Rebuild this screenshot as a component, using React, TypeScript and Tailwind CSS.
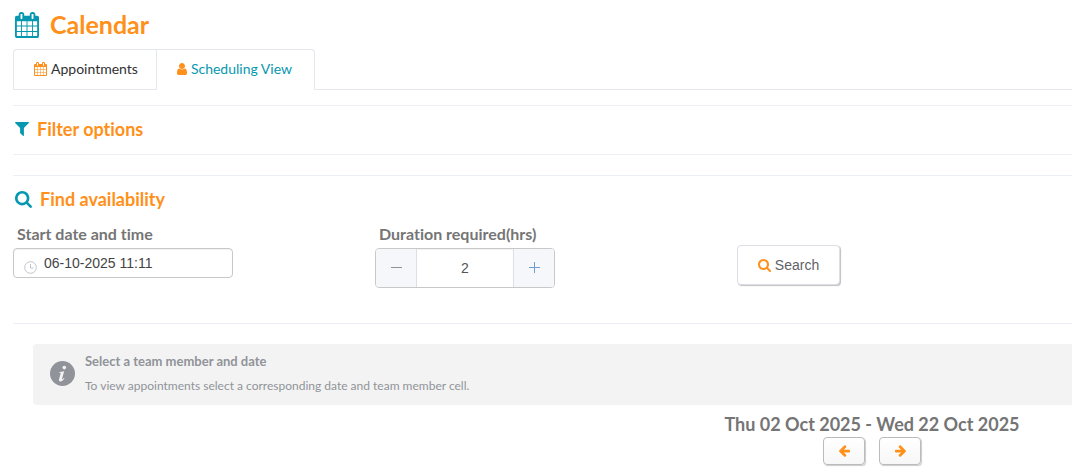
import { useState } from "react";
import type { ReactNode } from "react";

const ICONS = {
  calendar:
    "M192 1664h288v-288h-288v288zm352 0h320v-288h-320v288zm-352-352h288v-320h-288v320zm352 0h320v-320h-320v320zm-352-384h288v-288h-288v288zm736 736h320v-288h-320v288zm-384-736h320v-288h-320v288zm768 736h288v-288h-288v288zm-384-352h320v-320h-320v320zm-352-864v-288q0-13-9.5-22.5t-22.5-9.5h-64q-13 0-22.5 9.5t-9.5 22.5v288q0 13 9.5 22.5t22.5 9.5h64q13 0 22.5-9.5t9.5-22.5zm736 864h288v-320h-288v320zm-384-384h320v-288h-320v288zm384 0h288v-288h-288v288zm32-480v-288q0-13-9.5-22.5t-22.5-9.5h-64q-13 0-22.5 9.5t-9.5 22.5v288q0 13 9.5 22.5t22.5 9.5h64q13 0 22.5-9.5t9.5-22.5zm384-64v1280q0 52-38 90t-90 38h-1408q-52 0-90-38t-38-90v-1280q0-52 38-90t90-38h128v-96q0-66 47-113t113-47h64q66 0 113 47t47 113v96h384v-96q0-66 47-113t113-47h64q66 0 113 47t47 113v96h128q52 0 90 38t38 90z",
  search:
    "M1216 832q0-185-131.5-316.5t-316.5-131.5-316.5 131.5-131.5 316.5 131.5 316.5 316.5 131.5 316.5-131.5 131.5-316.5zm512 832q0 52-38 90t-90 38q-54 0-90-38l-343-342q-179 124-399 124-143 0-273.5-55.5t-225-150-150-225-55.5-273.5 55.5-273.5 150-225 225-150 273.5-55.5 273.5 55.5 225 150 150 225 55.5 273.5q0 220-124 399l343 343q37 37 37 90z",
  filter:
    "M1595 295q17 41-14 70l-493 493v742q0 42-39 59-13 5-25 5-27 0-45-19l-256-256q-19-19-19-45v-486l-493-493q-31-29-14-70 17-39 59-39h1280q42 0 59 39z",
  user: "M1536 1399q0 109-62.5 187t-150.5 78h-854q-88 0-150.5-78t-62.5-187q0-85 8.5-160.5t31.5-152 58.5-131 94-89 134.5-34.5q131 128 313 128t313-128q76 0 134.5 34.5t94 89 58.5 131 31.5 152 8.5 160.5zm-256-887q0 159-112.5 271.5t-271.5 112.5-271.5-112.5-112.5-271.5 112.5-271.5 271.5-112.5 271.5 112.5 112.5 271.5z",
  arrow:
    "M1600 960q0 54-37 91l-651 651q-39 37-91 37-51 0-90-37l-75-75q-38-38-38-91t38-91l293-293h-704q-52 0-84.5-37.5t-32.5-90.5v-128q0-53 32.5-90.5t84.5-37.5h704l-293-294q-38-36-38-90t38-90l75-75q38-38 90-38 53 0 91 38l651 651q37 35 37 90z",
};

// each glyph is cropped to its own width so it can sit inline with text
const BOXES = {
  calendar: "64 0 1664 1792",
  search: "64 128 1664 1664",
  filter: "192 256 1408 1408",
  user: "256 128 1280 1536",
  arrow: "128 160 1472 1579",
};

function Icon({ name, className }: { name: keyof typeof ICONS; className: string }) {
  return (
    <svg viewBox={BOXES[name]} className={`shrink-0 fill-current ${className}`} aria-hidden="true">
      <path d={ICONS[name]} />
    </svg>
  );
}

export default function App() {
  const [start, setStart] = useState("06-10-2025 11:11");
  const [hours, setHours] = useState(2);

  return (
    <main className="bg-white pb-1 pl-[13px] pt-[7px] font-[Lato,sans-serif] text-[#757575] [font-variant-ligatures:none]">
      <h1 className="flex h-9 items-center gap-[11px] pl-0.5 text-[25px] font-bold text-[#ff9019]">
        <Icon name="calendar" className="h-[26px] w-6 text-[#0698b0]" />
        Calendar
      </h1>

      <nav className="mt-1.5 flex h-[41px] text-sm leading-5">
        <a href="#appointments" className="flex items-start gap-1 rounded-tl border border-r-0 border-[#e4e7ed] pl-5 pr-[18px] pt-[9px] text-[#303133]">
          <Icon name="calendar" className="mt-[3px] h-[14px] w-[13px] text-[#ff9019]" />
          Appointments
        </a>
        <a href="#scheduling" className="flex items-start gap-1 rounded-tr border border-b-0 border-[#e4e7ed] pl-5 pr-[22px] pt-[9px] text-[#0698b0]">
          <Icon name="user" className="mt-1 h-3 w-[10px] text-[#ff9019]" />
          Scheduling View
        </a>
        <span className="flex-1 border-b border-[#e4e7ed]" />
      </nav>

      <Section className="mt-[15px] h-[50px] border-b">
        <SectionTitle>
          <Icon name="filter" className="h-[14px] w-[14px] text-[#0698b0]" />
          Filter options
        </SectionTitle>
      </Section>

      <Section className="mt-5 border-b">
        <SectionTitle>
          <Icon name="search" className="h-[17px] w-[17px] text-[#0698b0]" />
          Find availability
        </SectionTitle>
        <form className="flex h-[101px] pt-0.5" onSubmit={(e) => e.preventDefault()}>
          <div className="w-[362px] shrink-0">
            <FieldLabel id="start">Start date and time</FieldLabel>
            <div className="flex h-[30px] w-[220px] rounded border border-[#c8c8c8] shadow-[inset_0_1px_1px_rgba(0,0,0,0.06)]">
              <ClockIcon />
              <input
                id="start"
                value={start}
                onChange={(e) => setStart(e.target.value)}
                className="min-w-0 flex-1 bg-transparent pl-[7px] font-[Liberation_Sans,sans-serif] text-sm text-[#444] outline-none"
              />
            </div>
          </div>
          <div className="w-[362px] shrink-0">
            <FieldLabel id="hours">Duration required(hrs)</FieldLabel>
            <div className="flex h-10 w-[180px] overflow-hidden rounded border border-[#c8c8c8]">
              <StepButton label="Decrease" onClick={() => setHours(Math.max(0, hours - 1))} className="border-r text-[#909399]">
                <path d="M1 5.5h11" />
              </StepButton>
              <input
                id="hours"
                value={hours}
                onChange={(e) => setHours(Number(e.target.value) || 0)}
                className="min-w-0 flex-1 text-center font-[Liberation_Sans,sans-serif] text-sm text-[#555] shadow-[inset_0_1px_1px_rgba(0,0,0,0.06)] outline-none"
              />
              <StepButton label="Increase" onClick={() => setHours(hours + 1)} className="border-l text-[#6f9fd0]">
                <path d="M1 5.5h11M6.5 0v11" />
              </StepButton>
            </div>
          </div>
          <button
            type="submit"
            className="mt-[21px] flex h-10 w-[103px] shrink-0 items-center justify-center gap-1 rounded border border-[#dcdfe6] bg-white font-[Liberation_Sans,sans-serif] text-sm text-[#606266] shadow-[1px_1px_1px_rgba(0,0,0,0.25)]"
          >
            <Icon name="search" className="h-[13px] w-[13px] text-[#ff9019]" />
            Search
          </button>
        </form>
      </Section>

      <div role="status" className="ml-5 mt-5 flex h-[61px] gap-[10px] rounded-l bg-[#f3f3f3] pl-[17px] pt-2 text-[#909399]">
        <InfoIcon />
        <div>
          <p className="text-[13px] font-bold leading-[18px]">Select a team member and date</p>
          <p className="mt-[7px] text-xs leading-[18px]">To view appointments select a corresponding date and team member cell.</p>
        </div>
      </div>

      <div className="ml-auto mt-[7px] w-[400px] text-center">
        <h2 className="text-lg font-bold leading-6">Thu 02 Oct 2025 - Wed 22 Oct 2025</h2>
        <div className="mt-px flex justify-center gap-[14px]">
          <PagerButton label="Previous dates">
            <Icon name="arrow" className="h-3 w-[11px] -scale-x-100" />
          </PagerButton>
          <PagerButton label="Next dates">
            <Icon name="arrow" className="h-3 w-[11px]" />
          </PagerButton>
        </div>
      </div>
    </main>
  );
}

function Section({ className, children }: { className: string; children: ReactNode }) {
  return <section className={`border-t border-[#ebeef5] ${className}`}>{children}</section>;
}

function SectionTitle({ children }: { children: ReactNode }) {
  return <h2 className="flex h-[46px] items-center gap-2 pl-0.5 text-lg font-bold text-[#ff9019]">{children}</h2>;
}

function FieldLabel({ id, children }: { id: string; children: ReactNode }) {
  return (
    <label htmlFor={id} className="block h-6 pl-1 text-base font-bold leading-5">
      {children}
    </label>
  );
}

function StepButton({
  label,
  onClick,
  className,
  children,
}: {
  label: string;
  onClick: () => void;
  className: string;
  children: ReactNode;
}) {
  return (
    <button
      type="button"
      aria-label={label}
      onClick={onClick}
      className={`flex w-[41px] shrink-0 items-center justify-center border-[#dcdfe6] bg-[#f5f7fa] ${className}`}
    >
      <svg viewBox="0 0 13 13" className="h-[13px] w-[13px] stroke-current" aria-hidden="true">
        {children}
      </svg>
    </button>
  );
}

function PagerButton({ label, children }: { label: string; children: ReactNode }) {
  return (
    <button
      type="button"
      aria-label={label}
      className="flex h-7 w-[42px] items-center justify-center rounded-sm border border-[#bbb] bg-linear-to-b from-white to-[#f7f7f7] text-[#ff9019] shadow-[1px_1px_1px_rgba(0,0,0,0.2)]"
    >
      {children}
    </button>
  );
}

function ClockIcon() {
  return (
    <svg viewBox="0 0 13 13" className="ml-[10px] mt-3 h-[13px] w-[13px] fill-none stroke-[#c0c4cc]" aria-hidden="true">
      <circle cx="6.5" cy="6.5" r="5.8" />
      <path d="M6.5 3v4h3" />
    </svg>
  );
}

function InfoIcon() {
  return (
    <svg viewBox="0 0 25 25" className="mt-[9px] h-[25px] w-[25px] shrink-0" aria-hidden="true">
      <circle cx="12.5" cy="12.5" r="12.5" fill="#909399" />
      <circle cx="14.3" cy="6.6" r="1.8" fill="#f3f3f3" />
      <path d="M9.2 11.3l5-1-2.1 7.3c-.3 1.2.3 1.1 1.8-.6l.6.5c-1.5 2-2.8 2.9-4.1 2.9-1.3 0-1.7-.9-1.3-2.4l1.5-5.2c.2-.8-.2-1-1.4-1z" fill="#f3f3f3" />
    </svg>
  );
}
